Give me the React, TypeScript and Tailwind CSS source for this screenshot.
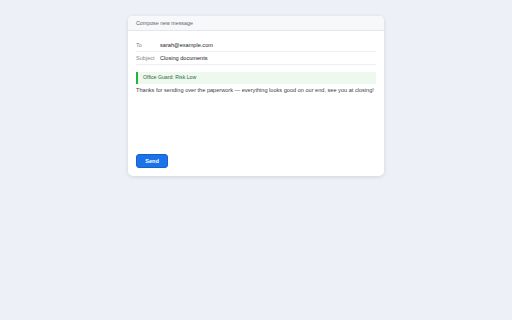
import React from 'react';

const App: React.FC = () => {
  return (
    <div className="min-h-screen w-full bg-[#edf1f7] pt-4 font-['Liberation_Sans',Arial,sans-serif]">
      <div className="mx-auto w-[256px] h-[160px] rounded-[5px] bg-white shadow-[0_1px_4px_rgba(0,0,0,0.12)] flex flex-col overflow-hidden">
        <div className="h-[15px] shrink-0 bg-[#f7f8fa] border-b border-[#e3e6ea] px-2 pt-px flex items-center text-[5.3px] text-[#5f6368]">
          Compose new message
        </div>
        <div className="px-2 pt-[8px] pb-2 flex flex-col flex-1">
          <div className="flex items-center h-[13px] border-b border-[#eceef1] text-[5.6px]">
            <span className="w-6 text-[#80868b]">To</span>
            <span className="text-[#202124]">sarah@example.com</span>
          </div>
          <div className="flex items-center h-[13px] border-b border-[#eceef1] text-[5.6px]">
            <span className="w-6 text-[#80868b]">Subject</span>
            <span className="text-[#202124]">Closing documents</span>
          </div>
          <div className="mt-[7px] h-[12px] bg-[#edf8ee] border-l-2 border-[#22b43c] pl-[5px] flex items-center text-[5.2px] text-[#2e6b3a]">
            Office Guard: Risk Low
          </div>
          <p className="mt-[2px] text-[5.6px] text-[#3c4043] leading-[8px] whitespace-nowrap">
            Thanks for sending over the paperwork — everything looks good on our end, see you at closing!
          </p>
          <div className="mt-auto flex">
            <button className="w-8 h-[14px] rounded-[3px] bg-[#1a73e8] text-white text-[5.6px] font-bold border border-[#1662c9] flex items-center justify-center">
              Send
            </button>
          </div>
        </div>
      </div>
    </div>
  );
};

export default App;
